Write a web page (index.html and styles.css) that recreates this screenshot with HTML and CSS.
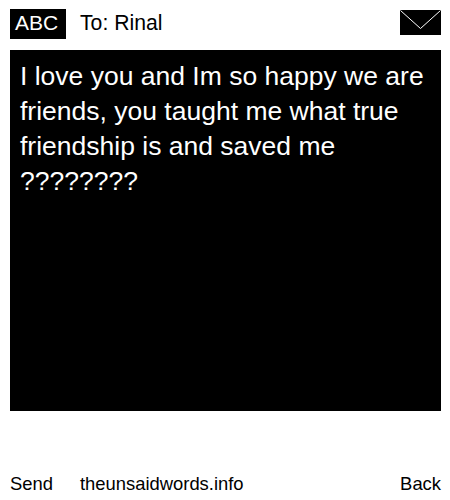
FILE: index.html
```html
<!DOCTYPE html>
<html lang="en">
<head>
    <meta charset="UTF-8">
    <meta name="viewport" content="width=device-width, initial-scale=1.0">
    <title>The Unsaid Words</title>
    <link rel="stylesheet" href="styles.css">
</head>
<body>
    <div class="phone">
        <div class="header">
            <div class="mode">ABC</div>
            <div class="to">To: Rinal</div>
            <svg class="envelope" width="41" height="25" viewBox="0 0 41 25">
                <rect width="41" height="25" fill="#000"/>
                <path d="M0.5 0.5 L20.5 18.5 L40.5 0.5" fill="none" stroke="#fff" stroke-width="1"/>
            </svg>
        </div>
        <div class="message">I love you and Im so happy we are friends, you taught me what true friendship is and saved me ????????</div>
        <div class="footer">
            <div class="send">Send</div>
            <div class="site">theunsaidwords.info</div>
            <div class="back">Back</div>
        </div>
    </div>
</body>
</html>
```

FILE: styles.css
```css
body {
    margin: 0;
    background-color: white;
    color: black;
    font-family: "Liberation Sans", Arial, sans-serif;
}
.phone {
    width: 431px;
    height: 500px;
    padding: 9px 9px 0 10px;
    display: flex;
    flex-direction: column;
}
.header {
    display: flex;
    align-items: flex-start;
    height: 41px;
}
.mode {
    width: 56px;
    height: 30px;
    box-sizing: border-box;
    padding-left: 5px;
    line-height: 28px;
    background-color: black;
    color: white;
    font-size: 21px;
}
.to {
    flex: 1;
    margin-left: 14px;
    height: 30px;
    line-height: 28px;
    font-size: 21.2px;
}
.envelope {
    display: block;
    margin-top: 1px;
}
.message {
    height: 361px;
    box-sizing: border-box;
    padding: 9px 10px;
    background-color: black;
    color: white;
    font-size: 26.5px;
    line-height: 35px;
}
.footer {
    display: flex;
    margin-top: 61px;
    font-size: 18.4px;
    line-height: 24px;
}
.send {
    width: 70px;
}
.site {
    flex: 1;
}
```
